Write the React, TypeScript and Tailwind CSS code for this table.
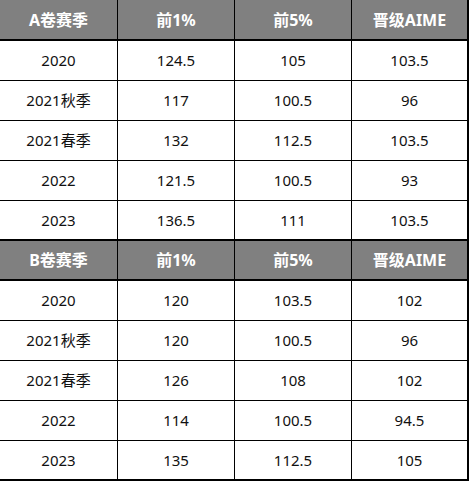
const groups = [
  {
    title: 'A卷赛季',
    rows: [
      ['2020', '124.5', '105', '103.5'],
      ['2021秋季', '117', '100.5', '96'],
      ['2021春季', '132', '112.5', '103.5'],
      ['2022', '121.5', '100.5', '93'],
      ['2023', '136.5', '111', '103.5'],
    ],
  },
  {
    title: 'B卷赛季',
    rows: [
      ['2020', '120', '103.5', '102'],
      ['2021秋季', '120', '100.5', '96'],
      ['2021春季', '126', '108', '102'],
      ['2022', '114', '100.5', '94.5'],
      ['2023', '135', '112.5', '105'],
    ],
  },
]

const colClass = [
  'w-[118px] border-r border-black',
  'w-[117px] border-r border-black',
  'w-[117px] border-r border-black',
  'w-[117px] border-r-2 border-black',
]

function Row({ cells, header, className }: { cells: string[]; header?: boolean; className: string }) {
  return (
    <div className={`flex border-black ${className} ${header ? 'bg-[#808080] text-white font-bold text-[16px]' : 'bg-white text-[#111] text-[15px]'}`}>
      {cells.map((c, i) => (
        <div key={i} className={`${colClass[i]} flex items-center justify-center`}>
          {c}
        </div>
      ))}
    </div>
  )
}

export default function App() {
  return (
    <div
      className="w-[469px] h-[481px] bg-white leading-none"
      style={{ fontFamily: '"Noto Sans", "Noto Sans CJK SC", sans-serif' }}
    >
      {groups.map((g, gi) => (
        <div key={g.title}>
          <Row
            header
            cells={[g.title, '前1%', '前5%', '晋级AIME']}
            className={gi === 0 ? 'h-[41px] border-b-2' : 'h-[40px] border-b-2'}
          />
          {g.rows.map((r, ri) => (
            <Row
              key={ri}
              cells={r}
              className={ri === g.rows.length - 1 ? 'h-[40px] border-b-2' : 'h-[40px] border-b'}
            />
          ))}
        </div>
      ))}
    </div>
  )
}
